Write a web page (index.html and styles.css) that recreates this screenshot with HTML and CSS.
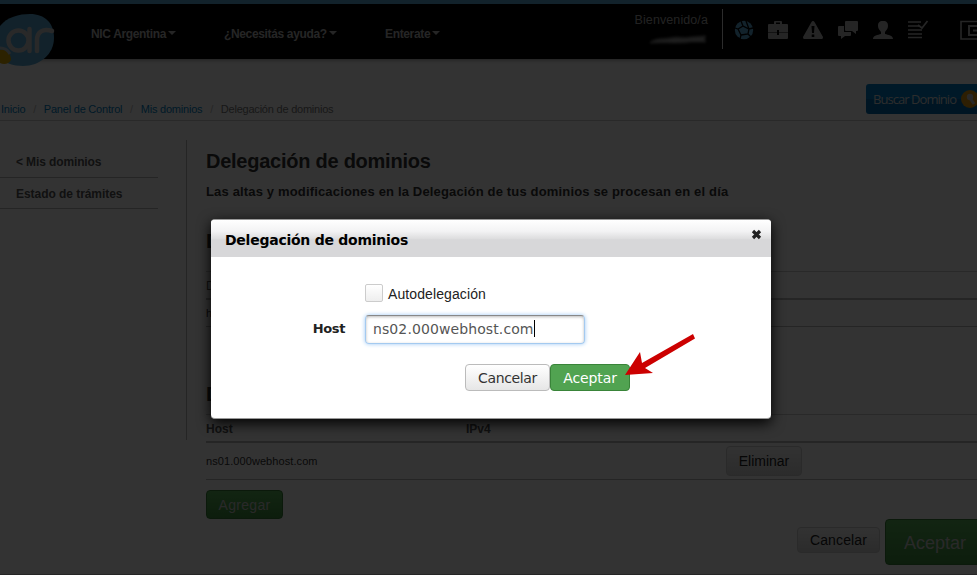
FILE: index.html
```html
<!DOCTYPE html>
<html lang="es">
<head>
<meta charset="utf-8">
<title>Delegación de dominios</title>
<link rel="stylesheet" href="styles.css">
</head>
<body>
<div class="page">
  <header class="topbar">
    <svg class="logo" width="56" height="54" viewBox="0 0 56 54">
      <path d="M0 13C7 4 19 1 30 1C45 1 54 10 54 25C54 41 40 53 23 53C13 53 4 50 0 44Z" fill="#5aaad7"/>
      <path d="M0 37C6 35 11 41 11 47C9 51 4 52 0 50Z" fill="#d9a800"/>
      <path d="M0 35C5 35 8 37 10 41" fill="none" stroke="#b8c8d0" stroke-width="3"/>
      <g fill="none" stroke="#ccc" stroke-width="4.500" stroke-linecap="round"><circle cx="18.500" cy="27.500" r="10"/><path d="M29.500 16V38M37 38V27C37 19 43 15 52 18"/></g>
    </svg>
    <nav class="menu">
      <a class="m1">NIC Argentina<i class="caret"></i></a>
      <a class="m2">¿Necesitás ayuda?<i class="caret"></i></a>
      <a class="m3">Enterate<i class="caret"></i></a>
    </nav>
    <div class="user"><span>Bienvenido/a</span>
      <svg width="60" height="12" viewBox="0 0 60 12"><path d="M3 8C9 3 15 6 22 4S37 5 43 3L57 2V8L42 8C30 10 15 8 3 9Z" fill="#999" stroke="#555" stroke-width="2"/></svg>
    </div>
    <div class="tools">
      <svg width="20" height="20" viewBox="0 0 20 20"><circle cx="10" cy="10" r="9.2" fill="#5aaad7"/><path d="M7 1L9 6L15 9L19 8M9 6L4 9L1 8M4 9L7 15L6 19M7 15L14 14L15 9M14 14L17 17M15 9L12 1" fill="none" stroke="#000" stroke-width="1.3"/></svg>
      <svg width="22" height="20" viewBox="0 0 22 20"><path d="M7 4V2Q7 1 8 1H14Q15 1 15 2V4H20Q21 4 21 5V12H12V10H10V12H1V5Q1 4 2 4ZM9 4H13V2.500H9ZM1 12.500H10V15H12V12.500H21V18Q21 19 20 19H2Q1 19 1 18Z" fill="#bbb" fill-rule="evenodd"/></svg>
      <svg width="22" height="20" viewBox="0 0 22 20"><path d="M11 1Q12 1 12.500 2L21 17Q21 19 20 19H2Q1 19 1 17L9.500 2Q10 1 11 1Z" fill="#bbb"/><path d="M9.500 6H12.500L12 13H10ZM9.700 14.500H12.300V17H9.700Z" fill="#000"/></svg>
      <svg width="22" height="20" viewBox="0 0 22 20"><path d="M9 1H20Q21 1 21 2V10Q21 11 20 11H19V14L15 11H9Q8 11 8 10V2Q8 1 9 1ZM2 6H7V12H14V15Q14 16 13 16H8L4 19V16H2Q1 16 1 15V7Q1 6 2 6Z" fill="#bbb"/></svg>
      <svg width="22" height="20" viewBox="0 0 22 20"><path d="M11 1C15 1 16 3 16 6C16 9 14 10 13 12V14C16 15 21 15 21 19H1C1 15 6 15 9 14V12C8 10 6 9 6 6C6 3 7 1 11 1Z" fill="#bbb"/></svg>
      <svg width="22" height="20" viewBox="0 0 22 20"><path d="M1 2H14M1 6H12M1 10H15M1 14H15M1 17.500H15" stroke="#bbb" stroke-width="1.700"/><path d="M11 5L15 8L20.500 1" fill="none" stroke="#bbb" stroke-width="1.700"/></svg>
      <svg class="exit" width="22" height="20" viewBox="0 0 22 20"><path d="M22 1.500H1V19H22" fill="none" stroke="#bbb" stroke-width="1.600"/><path d="M17 6H9V15H17M13 10.500H17" fill="none" stroke="#bbb" stroke-width="2"/></svg>
    </div>
  </header>

  <div class="crumbrow">
    <div class="crumbs"><a>Inicio</a><s>/</s><a class="c2">Panel de Control</a><s>/</s><a>Mis dominios</a><s>/</s><span>Delegación de dominios</span></div>
    <a class="search"><span>Buscar Dominio</span>
      <svg width="18" height="18" viewBox="0 0 18 18"><circle cx="9" cy="9" r="9" fill="#e59a10"/><path d="M9 8L13 14" stroke="#ccc" stroke-width="3"/><circle cx="9" cy="7" r="3.200" fill="#ccc"/></svg>
    </a>
  </div>

  <div class="columns">
    <aside class="side"><a>&lt; Mis dominios</a><a>Estado de trámites</a></aside>
    <main class="content">
      <h1>Delegación de dominios</h1>
      <p class="lead">Las altas y modificaciones en la Delegación de tus dominios se procesan en el día</p>
      <h2>D</h2>
      <div class="thead first">D</div>
      <div class="trow slim">h</div>
      <h2 class="second">D</h2>
      <div class="thead"><span>Host</span><span>IPv4</span></div>
      <div class="trow"><span>ns01.000webhost.com</span><span></span><button class="btn eliminar">Eliminar</button></div>
      <button class="btn green agregar">Agregar</button>
      <div class="actions"><button class="btn cancel">Cancelar</button><button class="btn green accept">Aceptar</button></div>
    </main>
  </div>
</div>

<div class="backdrop">
  <section class="modal">
    <div class="mhead"><h3>Delegación de dominios</h3>
      <svg width="11" height="11" viewBox="0 0 11 11"><path d="M2 2L9 9M9 2L2 9" stroke="#222" stroke-width="3.200"/></svg>
    </div>
    <div class="mbody">
      <label class="check"><i class="box"></i><span>Autodelegación</span></label>
      <div class="field"><label>Host</label><div class="input"><span>ns02.000webhost.com</span><i class="cursor"></i></div></div>
      <div class="mactions"><button class="btn mcancel">Cancelar</button><button class="btn maccept">Aceptar</button></div>
    </div>
    <svg class="arrow" width="74" height="48" viewBox="0 0 74 48"><path d="M1 41L16 18L18 29L69 0L71 4.500L21 34L29 39Z" fill="#c00"/></svg>
  </section>
</div>
</body>
</html>
```
FILE: styles.css
```css
* { box-sizing: border-box; }
body { margin: 0; width: 977px; height: 575px; overflow: hidden; background: #fff; font-family: "Liberation Sans", Arial, sans-serif; color: #333; }
h1, h2, h3, p { margin: 0; }
i { font-style: normal; }
.page { width: 977px; height: 575px; overflow: hidden; border-bottom: 1px solid #bbb; }

.topbar { height: 59px; background: #000; border-top: 4px solid #5aaad7; display: flex; box-shadow: 0 1px 4px rgba(0,0,0,.4); }
.logo { margin-top: 9px; flex: none; }
.menu { display: flex; flex: none; width: 537px; padding-top: 22px; margin-left: 35px; font: bold 12px/16px "Liberation Sans", Arial, sans-serif; letter-spacing: -.35px; color: #bbb; }
.menu a { white-space: nowrap; }
.m1 { width: 133px; }
.m2 { width: 161px; }
.caret { display: inline-block; border: 4px solid transparent; border-top-color: #bbb; border-bottom: 0; margin-left: 2px; vertical-align: 3px; }
.user { width: 80px; flex: none; margin-top: 6px; display: flex; flex-direction: column; align-items: flex-end; color: #aaa; }
.user span { font-size: 12.5px; line-height: 20px; letter-spacing: .1px; white-space: nowrap; }
.user svg { margin-top: 4px; filter: blur(1px); }
.tools { display: flex; flex: none; gap: 13px; margin: 5px 0 0 14px; padding: 11px 0 0 11px; height: 40px; border-left: 1px solid #ddd; }
.tools svg { flex: none; }
.tools .exit { margin-left: 18px; }

.crumbrow { height: 62px; border-bottom: 1px solid #ccc; display: flex; justify-content: space-between; }
.crumbs { padding-top: 43px; font-size: 11px; line-height: 14px; letter-spacing: -.22px; color: #777; display: flex; white-space: nowrap; }
.crumbs a { color: #007fc4; }
.crumbs a:first-child { margin-left: 1px; }
.crumbs s { text-decoration: none; color: #bbb; width: 18.5px; text-align: center; }
.search { width: 111px; height: 30px; margin-top: 25px; border-radius: 3px 0 0 3px; background: linear-gradient(#007fc8 50%, #006bb0 50%); color: #ddd; display: flex; align-items: center; padding-left: 7px; overflow: hidden; }
.search span { font: 13px/30px "Open Sans", sans-serif; letter-spacing: -.95px; white-space: nowrap; flex: none; width: 88px; }
.search svg { flex: none; }

.columns { display: flex; }
.side { width: 187px; height: 300px; margin-top: 19px; padding-right: 28px; border-right: 1px solid #bbb; }
.side a { display: block; height: 31px; border-bottom: 1px solid #bbb; padding-left: 16px; font: bold 12px/32px "Liberation Sans", Arial, sans-serif; letter-spacing: -.05px; color: #555; }
.side a:first-child { height: 38px; line-height: 45px; letter-spacing: -.12px; }
.content { width: 771px; margin-left: 19px; flex: none; }
h1 { font-size: 20px; line-height: 24px; letter-spacing: -.25px; margin-top: 28px; white-space: nowrap; }
.lead { font-weight: bold; font-size: 13px; line-height: 20px; letter-spacing: .16px; margin-top: 9px; white-space: nowrap; }
h2 { font-size: 21px; line-height: 24px; margin-top: 27px; height: 42px; }
.thead { height: 29px; border-top: 1px solid #ccc; border-bottom: 2px solid #bbb; font: bold 12px/28px "Liberation Sans", Arial, sans-serif; display: grid; grid-template-columns: 260px 260px 1fr; color: #555; }
.first { font-weight: normal; }
.trow { height: 37px; border-bottom: 1px solid #bbb; font-size: 11px; letter-spacing: .08px; display: grid; grid-template-columns: 260px 260px 1fr; align-items: center; }
.slim { height: 27px; }
h2.second { margin-top: 55px; height: 32px; }
.btn { font-family: "Liberation Sans", Arial, sans-serif; font-size: 14px; padding: 0; border: 1px solid #bbb; border-radius: 4px; color: #333; background: linear-gradient(#fff, #e6e6e6); text-align: center; }
.page .btn { background: linear-gradient(#fafafa, #d8d8d8); border-color: #d0d0d0; color: #222; }
.page .green { background: linear-gradient(#5bb75b, #3f913f); border-color: #377e37; color: #ccc; }
.eliminar { width: 76px; height: 30px; }
.page .agregar { display: block; width: 77px; height: 29px; margin-top: 10px; letter-spacing: .3px; }
.actions { display: flex; align-items: flex-start; justify-content: flex-end; gap: 5px; }
.cancel { width: 83px; height: 26px; margin-top: 8px; letter-spacing: .15px; }
.page .accept { width: 100px; height: 46px; font-size: 18px; margin-right: -8px; padding-top: 2px; flex: none; }

.backdrop { position: absolute; inset: 0; background: rgba(0,0,0,.8); z-index: 5; }
.modal { position: relative; width: 560px; height: 200px; margin: 219px 0 0 211px; background: #fff; border: 1px solid #999; border-width: 1px 0; border-radius: 4px; box-shadow: 0 4px 14px #000; }
.mhead { height: 37px; border-radius: 3px 3px 0 0; background: linear-gradient(#fff, #f3f3f4 30%, #dcdcdd 52%, #d7d7d9 53%); display: flex; justify-content: space-between; padding: 0 9px 0 14px; color: #000; }
h3 { font: bold 14px/41px "DejaVu Sans", sans-serif; letter-spacing: -.25px; white-space: nowrap; }
.mhead svg { margin-top: 9px; }
.check { display: flex; align-items: center; gap: 5px; margin: 27px 0 0 154px; height: 18px; font-size: 14px; }
.box { width: 18px; height: 18px; border: 1px solid #ccc; border-radius: 2px; background: linear-gradient(#fff, #eee); }
.check span { padding-top: 2px; letter-spacing: .1px; color: #222; }
.field { display: flex; margin-top: 13px; height: 29px; }
.field label { width: 134px; text-align: right; font: bold 13px/28px "DejaVu Sans", sans-serif; letter-spacing: -.4px; color: #222; }
.input { width: 220px; margin-left: 20px; border: 1px solid #a4caf0; border-top-color: #888; border-radius: 4px; box-shadow: 0 0 4px #9bc8f5, inset 0 1px 3px #bbb; display: flex; align-items: center; padding: 0 0 2px 7px; font: 14px/24px "DejaVu Sans", sans-serif; letter-spacing: .1px; color: #555; }
.cursor { width: 1px; height: 17px; background: #000; }
.mactions { display: flex; margin: 20px 0 0 254px; }
.mactions .btn { font-family: "DejaVu Sans", sans-serif; height: 27px; letter-spacing: -.1px; }
.mactions .mcancel { width: 85px; letter-spacing: -.35px; }
.mactions .maccept { width: 80px; background: #51a351; border-color: #398439; color: #fff; }
.arrow { position: absolute; left: 413px; top: 114px; }
```
